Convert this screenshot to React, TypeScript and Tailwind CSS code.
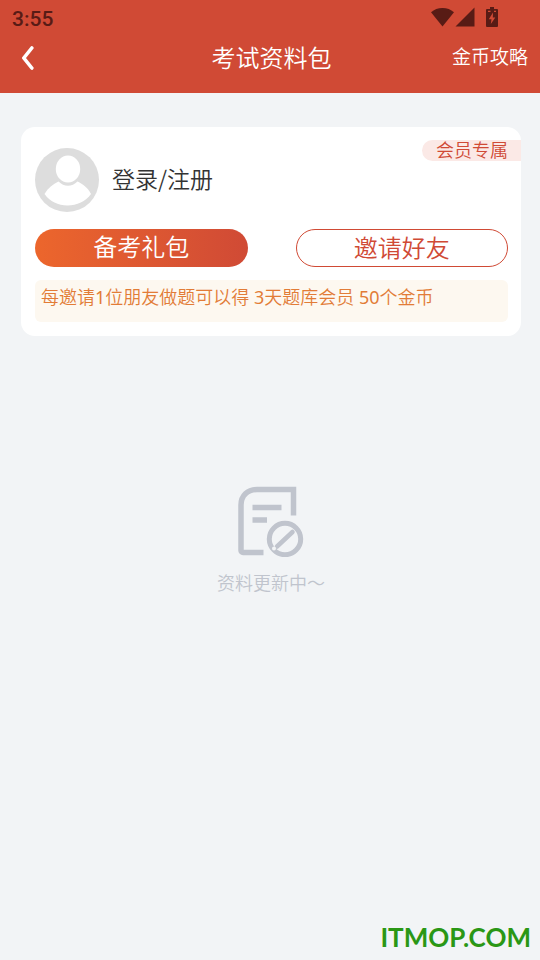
function StatusBar() {
  return (
    <div className="flex h-9 items-center justify-between pl-3 pr-[42px] text-[#581b15]">
      <span className="pt-0.5 font-['Roboto',sans-serif] text-[21px] leading-9 font-medium">3:55</span>
      <div className="flex items-center pb-0.5">
        <svg className="h-5 w-6" viewBox="0 0 24 20" fill="currentColor" aria-hidden="true">
          <path d="M0 5.300C3.200 2.500 7 1 11.500 1S19.800 2.500 23 5.300L11.500 19.500Z" />
        </svg>
        <svg className="h-5 w-5" viewBox="0 0 20 20" fill="currentColor" aria-hidden="true">
          <path d="M19.500 0.500v19H0.500Z" />
        </svg>
        <svg className="ml-[11px] h-5 w-3" viewBox="0 0 12 20" aria-hidden="true">
          <path
            fill="currentColor"
            fillRule="evenodd"
            d="M4 0h4v2h3a1 1 0 0 1 1 1v16a1 1 0 0 1-1 1H1a1 1 0 0 1-1-1V3a1 1 0 0 1 1-1h3ZM7 5.500 2.800 12.200H5.500L4.800 17 9.300 10.500H6.800ZM2 3.800v1.200h2.500V3.800ZM8 3.800v1.200h2V3.800Z"
          />
        </svg>
      </div>
    </div>
  )
}

function Header() {
  return (
    <header className="bg-[#d04a35] pb-3.5">
      <StatusBar />
      <div className="grid h-[43px] grid-cols-[1fr_auto_1fr] items-center pl-[15px] pr-3 text-white">
        <button type="button" aria-label="返回" className="flex h-8 w-6 items-center justify-center">
          <svg className="h-6 w-4" viewBox="0 0 16 24" fill="none" aria-hidden="true">
            <path
              d="M12.800 2 4.800 12l8 10"
              stroke="currentColor"
              strokeWidth="3.600"
              strokeLinecap="round"
              strokeLinejoin="round"
            />
          </svg>
        </button>
        <h1 className="text-2xl">考试资料包</h1>
        <a href="#coins" className="justify-self-end pb-px text-[19px] leading-7">
          金币攻略
        </a>
      </div>
    </header>
  )
}

function Avatar() {
  return (
    <svg className="size-16" viewBox="0 0 64 64" aria-hidden="true">
      <circle cx="32" cy="32" r="32" fill="#dddddd" />
      <path
        d="M9.500 46C13 40 18 36 23.500 33.500c5.500 5.700 13.500 5.700 19 0C48 36 53 40 56 46c-5.500 7.500-14 11.500-23.500 11.500S15 53.500 9.500 46Z"
        fill="#fff"
      />
      <ellipse cx="33" cy="21" rx="12.200" ry="13.600" fill="#fff" />
    </svg>
  )
}

function MemberCard() {
  return (
    <section className="relative rounded-[14px] bg-white pt-[21px] pr-[13px] pb-3.5 pl-3.5">
      <span className="absolute top-[13px] right-0 h-[21px] rounded-l-full bg-[#fbe9e6] pr-[13px] pl-3.5 text-lg leading-5 text-[#d04a35]">
        会员专属
      </span>

      <a
        href="#login"
        className="flex items-center gap-[13px] font-['Noto_Sans_CJK_SC',sans-serif] text-[23px] text-[#333333]"
      >
        <Avatar />
        <span className="pb-1">登录/注册</span>
      </a>

      <div className="mt-[17px] grid grid-cols-2 gap-12">
        <button
          type="button"
          className="h-[38px] rounded-full bg-linear-to-r from-[#ec662c] to-[#d04a35] pb-0.5 text-2xl leading-9 text-white"
        >
          备考礼包
        </button>
        <button
          type="button"
          className="h-[38px] rounded-full border border-[#d04a35] text-2xl leading-9 text-[#d04a35]"
        >
          邀请好友
        </button>
      </div>

      <p className="mt-[13px] rounded-md bg-[#fdf8f0] px-1.5 pt-[3px] pb-[11px] text-lg text-[#e27c37]">
        每邀请<span className="font-normal">1</span>位朋友做题可以得{' '}
        <span className="font-normal">3</span>天题库会员 <span className="font-normal">50</span>个金币
      </p>
    </section>
  )
}

function EmptyState() {
  return (
    <div className="mt-[150px] flex flex-col items-center text-[#c0c4cd]">
      <svg className="h-[71px] w-[66px]" viewBox="0 0 66 71" fill="none" stroke="currentColor" aria-hidden="true">
        <path d="M25.500 66.500H5a2 2 0 0 1-2-2V19C3 9.500 9.500 3.500 19 3.500h36.500v26" strokeWidth="5.500" />
        <path d="M14.500 21.500h29M14.500 34H29" strokeWidth="5.500" />
        <circle cx="47" cy="53" r="15.700" strokeWidth="5" />
        <path d="M39 60.500 54.500 46" strokeWidth="4.500" strokeLinecap="round" />
        <circle cx="36" cy="62.500" r="2" fill="#f2f4f6" stroke="none" />
      </svg>
      <p className="mt-3 text-lg">资料更新中～</p>
    </div>
  )
}

export default function App() {
  return (
    <div className="flex min-h-screen flex-col bg-[#f2f4f6] font-['Noto_Sans','Noto_Sans_CJK_SC',sans-serif] font-[350]">
      <Header />
      <main className="pt-[34px] pr-[19px] pl-[21px]">
        <MemberCard />
        <EmptyState />
      </main>
      <footer className="mt-auto pr-[9px] pb-[7px] text-right font-['Lato',sans-serif] text-[26px] leading-8 font-bold text-[#2a9715]">
        ITMOP.COM
      </footer>
    </div>
  )
}
